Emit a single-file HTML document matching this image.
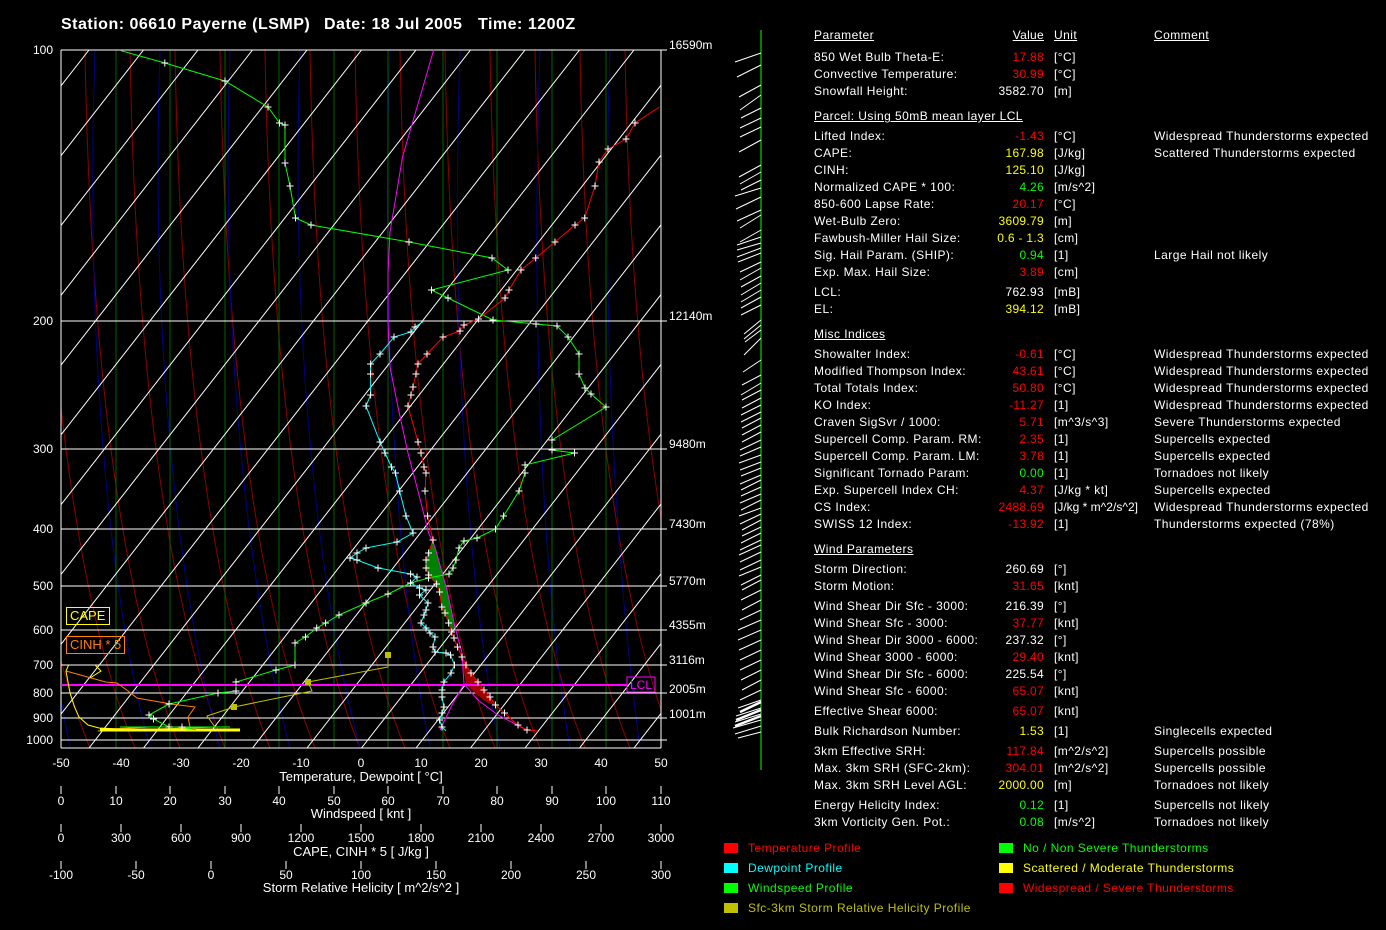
<!DOCTYPE html>
<html><head><meta charset="utf-8"><style>
html,body{margin:0;padding:0;background:#000;width:1386px;height:930px;overflow:hidden}
body{position:relative;font-family:"Liberation Sans",sans-serif;color:#fff;font-size:12px}
.t{position:absolute;white-space:nowrap;line-height:14px;letter-spacing:0.45px}
.u{text-decoration:underline}
.v{position:absolute;white-space:nowrap;line-height:14px;right:342px;text-align:right;letter-spacing:0.3px}
.r{color:#f00}.y{color:#ff0}.g{color:#0f0}
svg{position:absolute;left:0;top:0}
</style></head><body>
<svg width="1386" height="930" viewBox="0 0 1386 930" font-family="Liberation Sans, sans-serif" font-size="12">
<defs>
<clipPath id="pc"><rect x="61" y="50" width="600" height="698"/></clipPath>
<marker id="cw" markerWidth="7" markerHeight="7" refX="3.5" refY="3.5" markerUnits="userSpaceOnUse"><path d="M0 3.5H7M3.5 0V7" stroke="#fff" stroke-width="1"/></marker>
<pattern id="bp" width="1" height="1"/>
</defs>
<g clip-path="url(#pc)" fill="none">
<g stroke="#8b0000" stroke-width="1">
<path d="M90 748C30 600 0 350 -5 50"/><path d="M135 748C75 600 45 350 40 50"/><path d="M180 748C120 600 90 350 85 50"/><path d="M225 748C165 600 135 350 130 50"/><path d="M270 748C210 600 180 350 175 50"/><path d="M315 748C255 600 225 350 220 50"/><path d="M360 748C300 600 270 350 265 50"/><path d="M405 748C345 600 315 350 310 50"/><path d="M450 748C390 600 360 350 355 50"/><path d="M495 748C435 600 405 350 400 50"/><path d="M540 748C480 600 450 350 445 50"/><path d="M585 748C525 600 495 350 490 50"/><path d="M630 748C570 600 540 350 535 50"/><path d="M675 748C615 600 585 350 580 50"/><path d="M720 748C660 600 630 350 625 50"/><path d="M765 748C705 600 675 350 670 50"/>
</g>
<g stroke="#00008b" stroke-width="1">
<path d="M70 748C40 600 20 350 30 50"/><path d="M150 748C110 600 85 350 95 50"/><path d="M220 748C180 600 150 350 160 50"/><path d="M290 748C250 600 220 350 230 50"/><path d="M360 748C320 600 290 350 300 50"/><path d="M430 748C400 600 380 350 390 50"/><path d="M500 748C470 600 450 350 460 50"/><path d="M570 748C545 600 530 350 540 50"/><path d="M640 748C620 600 600 350 610 50"/>
</g>
<g stroke="#006400"><path d="M116 50V748M170 50V748M225 50V748M279 50V748M334 50V748M388 50V748M443 50V748M497 50V748M552 50V748M606 50V748"/></g>
<g stroke="#fff" stroke-width="1">
<path d="M89 50l-545 698M143.5 50l-545 698M198 50l-545 698M252.5 50l-545 698M307 50l-545 698M361.5 50l-545 698M416 50l-545 698M470.5 50l-545 698M525 50l-545 698M579.5 50l-545 698M634 50l-545 698M688.5 50l-545 698M743 50l-545 698M797.5 50l-545 698M852 50l-545 698M906.5 50l-545 698M961 50l-545 698M1015.5 50l-545 698M1070 50l-545 698M1124.5 50l-545 698M1179 50l-545 698M1233.5 50l-545 698"/>
</g>
</g>
<g stroke="#fff"><path d="M61 50H667M61 321H667M61 449H667M61 529H667M61 586H667M61 630H667M61 665H667M61 693H667M61 718H667M61 740H667M61 748H661M61 50V748M661 50V748"/></g>
<polygon fill="#008000" points="433,540 428,553 426,560 426,568 428.6,575 436.6,584 439.6,592 441.8,607 445,613 448.6,623 452,630 455,627 447,590 435,547"/>
<polygon fill="#a00000" points="459,650 466,665 471,673 478,682 484,690 490,697 495.5,705 488,703 476,694 466,684 462,660"/>
<path d="M61 685H627" stroke="#f0f" stroke-width="2"/>
<rect x="627" y="677" width="28" height="15" fill="none" stroke="#f0f"/>
<text x="630" y="689" fill="#f0f">LCL</text>
<polyline fill="none" stroke="#f0f" points="433.6,50 427,73 402.5,157 390,232 388,273 388,322 390,367 398,407 408,453 418,491 428.6,533 435,547 447,590 455,627 462,653 464,684 478,700 498,715 527,730"/>
<polyline fill="none" stroke="#f0f" points="464,684 452,705 440,730"/>
<polyline fill="none" stroke="#ff8000" points="66,671 105.6,682 117,683 128,691 137,698 171,704 195,707 188,717 190,727 150,727 110,729"/>
<polyline fill="none" stroke="#ff0" points="68.6,665 66,671 68,682 70,693 74.5,707 79,717 88,725 99,728 120,729"/>
<polyline fill="none" stroke="#ff0" points="95,665 101,671 90,678"/>
<polyline fill="none" stroke="#c0c000" points="388,655 388,667 308,682 312,691 234,707 207,716 215,727 97.7,731"/>
<path d="M100 730H240" stroke="#ff0" stroke-width="3"/>
<path d="M120 727H230" stroke="#0f0" stroke-width="1"/>
<rect x="385" y="652" width="6" height="6" fill="#c0c000"/><rect x="305" y="679" width="6" height="6" fill="#c0c000"/><rect x="231" y="704" width="6" height="6" fill="#c0c000"/>
<polyline fill="none" stroke="#0f0" marker-mid="url(#cw)" points="121,50.7 164.8,63 225,81 268,107 279.5,123 285,125 285,163 290,186 295.5,218 311,225 409,242 492,258 508,270 431.5,290 448,298 493,320 536,324 557,326 568,337 579,354 579,374 585,388 591,394 606,407 552,440 552,450 574.5,453 525,465 525,473 519,491 503.6,516 495.5,529 477,538 464,541 459,548 456,560 453,568 449,574 428.5,578 410.5,583 388,594 366,603 339,615 325.6,623 316.7,628 305.5,637 295,643 295,665 276,670 236,682 236,691 218,693 169,704 149,715 153.5,719 169,727 182,727 196,730"/>
<polyline fill="none" stroke="#f00" marker-mid="url(#cw)" points="659.5,107 635,123 626,139 608,149 599,162 595,186 584.7,218 575,225 555,242 535.7,258 521,270 509,290 505,298 478.5,319 464,325 460,331 443,337 427,354 418,364 416,374 413,387 411,395 408,406 418,442 421,453 424,467 426,473 425,491 427.6,516 433,540 428.6,553 426,560 426,568 428.6,575 436.6,584 439.6,592 441.8,607 445,613 448.6,623 451.6,632 454,638 457.5,647 462,657 466,665 471,673 478,682 484,690 490,697 495.5,705 504.5,713 518,725 527,730 538,731"/>
<polyline fill="none" stroke="#0ff" marker-mid="url(#cw)" points="423,321.7 415,327 411,332 394,337 380,354 370.6,364 370.6,374 370.6,395 366,406 380,442 385,453 391.5,467 395.5,473 399.6,491 406,516 413,533 397,542 366,548 357,553 350,558 357,560 378,568 410.6,574 417,577 410.6,583 419.5,588 426,590 419.5,595 428,603 426,610 424,615 421,623 426,628 430,633 435,637 433,647 435,652 446,653 450.5,655 454.5,665 451,673 444,682 442,690 442,697 444,707 442,713 439.6,720 442,727 446,731"/>
<rect x="66.5" y="607.5" width="43" height="17" fill="none" stroke="#ff0"/><text x="70" y="620" fill="#ff0" font-size="13">CAPE</text>
<rect x="66.5" y="636.5" width="58" height="17" fill="none" stroke="#ff8000"/><text x="70" y="649" fill="#ff8000" font-size="13">CINH * 5</text>
<g fill="#fff" text-anchor="end">
<text x="53" y="54">100</text><text x="53" y="325">200</text><text x="53" y="453">300</text><text x="53" y="533">400</text><text x="53" y="590">500</text><text x="53" y="634">600</text><text x="53" y="669">700</text><text x="53" y="697">800</text><text x="53" y="722">900</text><text x="53" y="744">1000</text>
</g>
<g fill="#fff">
<text x="669" y="49">16590m</text><text x="669" y="320">12140m</text><text x="669" y="448">9480m</text><text x="669" y="528">7430m</text><text x="669" y="585">5770m</text><text x="669" y="629">4355m</text><text x="669" y="664">3116m</text><text x="669" y="693">2005m</text><text x="669" y="718">1001m</text>
</g>
<g fill="#fff" text-anchor="middle">
<text x="61" y="767">-50</text><text x="121" y="767">-40</text><text x="181" y="767">-30</text><text x="241" y="767">-20</text><text x="301" y="767">-10</text><text x="361" y="767">0</text><text x="421" y="767">10</text><text x="481" y="767">20</text><text x="541" y="767">30</text><text x="601" y="767">40</text><text x="661" y="767">50</text>
<text x="361" y="781" font-size="13">Temperature, Dewpoint [ °C]</text>
<text x="61" y="805">0</text><text x="116" y="805">10</text><text x="170" y="805">20</text><text x="225" y="805">30</text><text x="279" y="805">40</text><text x="334" y="805">50</text><text x="388" y="805">60</text><text x="443" y="805">70</text><text x="497" y="805">80</text><text x="552" y="805">90</text><text x="606" y="805">100</text><text x="661" y="805">110</text>
<text x="361" y="818" font-size="13">Windspeed  [ knt ]</text>
<text x="61" y="842">0</text><text x="121" y="842">300</text><text x="181" y="842">600</text><text x="241" y="842">900</text><text x="301" y="842">1200</text><text x="361" y="842">1500</text><text x="421" y="842">1800</text><text x="481" y="842">2100</text><text x="541" y="842">2400</text><text x="601" y="842">2700</text><text x="661" y="842">3000</text>
<text x="361" y="856" font-size="13">CAPE, CINH * 5  [ J/kg ]</text>
<text x="61" y="879">-100</text><text x="136" y="879">-50</text><text x="211" y="879">0</text><text x="286" y="879">50</text><text x="361" y="879">100</text><text x="436" y="879">150</text><text x="511" y="879">200</text><text x="586" y="879">250</text><text x="661" y="879">300</text>
<text x="361" y="892" font-size="13">Storm Relative Helicity  [ m^2/s^2 ]</text>
</g>
<g stroke="#fff"><path d="M61 786v8M116 786v8M170 786v8M225 786v8M279 786v8M334 786v8M388 786v8M443 786v8M497 786v8M552 786v8M606 786v8M661 786v8M61 824v8M121 824v8M181 824v8M241 824v8M301 824v8M361 824v8M421 824v8M481 824v8M541 824v8M601 824v8M661 824v8M61 861v8M136 861v8M211 861v8M286 861v8M361 861v8M436 861v8M511 861v8M586 861v8M661 861v8"/></g>
<path d="M761 30V770" stroke="#0f0"/>
<g stroke="#fff" stroke-width="1">
<path d="M761 53L735 62M761 65L737 77M761 85L739 97M761 95L740 110M761 108L741 118M761 118L740 128M761 127L740 137M761 140L739 152M761 165L739 177M761 172L740 184M761 180L741 190M761 188L735 196M761 197L736 209M761 210L737 221M761 215L740 228M761 230L740 242M761 237L737 245M761 243L737 250M761 248L737 257M761 253L738 262M761 262L740 272M761 268L740 280M761 276L741 287M761 283L741 295M761 290L741 302M761 297L741 308M761 305L741 315M761 320L744 334M761 325L744 339M761 330L745 342M761 338L744 355M761 360L743 372M761 375L742 385M761 383L741 395M761 390L742 400M761 398L742 408M761 405L741 415M761 412L741 422M761 418L742 428M761 425L742 435M761 432L742 442M761 440L740 450M761 447L740 456M761 455L739 463M761 462L740 470M761 468L741 476M761 475L740 484M761 480L741 490M761 487L741 496M761 494L740 503M761 500L741 510M761 508L739 516M761 514L740 524M761 520L742 530M761 527L742 536M761 533L741 543M761 540L740 550M761 545L739 555M761 552L740 562M761 560L740 570M761 567L739 576M761 575L741 585M761 580L742 590M761 590L741 600M761 600L742 610M761 610L740 620M761 620L738 630M761 630L738 640M761 640L739 650M761 650L740 660M761 660L740 670M761 670L741 680M761 680L742 690M761 690L740 700M761 700L738 708M761 708L736 716M761 714L735 722M761 720L733 728M761 726L735 734M761 732L738 738"/>
<path d="M761 702L740 712M761 710L736 720M761 716L735 726" stroke-width="2.5"/>
</g>
<rect x="724" y="843" width="14" height="10" fill="#f00"/><rect x="724" y="863" width="14" height="10" fill="#0ff"/><rect x="724" y="883" width="14" height="10" fill="#0f0"/><rect x="724" y="903" width="14" height="10" fill="#c0c000"/>
<rect x="999" y="843" width="14" height="10" fill="#0f0"/><rect x="999" y="863" width="14" height="10" fill="#ff0"/><rect x="999" y="883" width="14" height="10" fill="#f00"/>
<g letter-spacing="0.45">
<text x="748" y="852" fill="#f00">Temperature Profile</text><text x="748" y="872" fill="#0ff">Dewpoint Profile</text><text x="748" y="892" fill="#0f0">Windspeed Profile</text><text x="748" y="912" fill="#c0c000">Sfc-3km Storm Relative Helicity Profile</text>
<text x="1023" y="852" fill="#0f0">No / Non Severe Thunderstorms</text><text x="1023" y="872" fill="#ff0">Scattered / Moderate Thunderstorms</text><text x="1023" y="892" fill="#f00">Widespread / Severe Thunderstorms</text>
</g>
<g font-size="16" font-weight="bold" fill="#fff" letter-spacing="0.5">
<text x="61" y="29">Station: 06610 Payerne (LSMP)</text>
<text x="324" y="29">Date: 18 Jul 2005</text>
<text x="478" y="29">Time: 1200Z</text>
</g>
</svg>

<div class="t u" style="left:814px;top:28px">Parameter</div><div class="v u" style="top:28px">Value</div><div class="t u" style="left:1054px;top:28px">Unit</div><div class="t u" style="left:1154px;top:28px">Comment</div>

<div class="t" style="left:814px;top:50px">850 Wet Bulb Theta-E:</div><div class="v r" style="top:50px">17.88</div><div class="t" style="left:1054px;top:50px">[°C]</div>
<div class="t" style="left:814px;top:67px">Convective Temperature:</div><div class="v r" style="top:67px">30.99</div><div class="t" style="left:1054px;top:67px">[°C]</div>
<div class="t" style="left:814px;top:84px">Snowfall Height:</div><div class="v" style="top:84px">3582.70</div><div class="t" style="left:1054px;top:84px">[m]</div>

<div class="t u" style="left:814px;top:109px">Parcel: Using 50mB mean layer LCL</div>
<div class="t" style="left:814px;top:129px">Lifted Index:</div><div class="v r" style="top:129px">-1.43</div><div class="t" style="left:1054px;top:129px">[°C]</div><div class="t" style="left:1154px;top:129px">Widespread Thunderstorms expected</div>
<div class="t" style="left:814px;top:146px">CAPE:</div><div class="v y" style="top:146px">167.98</div><div class="t" style="left:1054px;top:146px">[J/kg]</div><div class="t" style="left:1154px;top:146px">Scattered Thunderstorms expected</div>
<div class="t" style="left:814px;top:163px">CINH:</div><div class="v y" style="top:163px">125.10</div><div class="t" style="left:1054px;top:163px">[J/kg]</div>
<div class="t" style="left:814px;top:180px">Normalized CAPE * 100:</div><div class="v g" style="top:180px">4.26</div><div class="t" style="left:1054px;top:180px">[m/s^2]</div>
<div class="t" style="left:814px;top:197px">850-600 Lapse Rate:</div><div class="v r" style="top:197px">20.17</div><div class="t" style="left:1054px;top:197px">[°C]</div>
<div class="t" style="left:814px;top:214px">Wet-Bulb Zero:</div><div class="v y" style="top:214px">3609.79</div><div class="t" style="left:1054px;top:214px">[m]</div>
<div class="t" style="left:814px;top:231px">Fawbush-Miller Hail Size:</div><div class="v y" style="top:231px">0.6 - 1.3</div><div class="t" style="left:1054px;top:231px">[cm]</div>
<div class="t" style="left:814px;top:248px">Sig. Hail Param. (SHIP):</div><div class="v g" style="top:248px">0.94</div><div class="t" style="left:1054px;top:248px">[1]</div><div class="t" style="left:1154px;top:248px">Large Hail not likely</div>
<div class="t" style="left:814px;top:265px">Exp. Max. Hail Size:</div><div class="v r" style="top:265px">3.89</div><div class="t" style="left:1054px;top:265px">[cm]</div>
<div class="t" style="left:814px;top:285px">LCL:</div><div class="v" style="top:285px">762.93</div><div class="t" style="left:1054px;top:285px">[mB]</div>
<div class="t" style="left:814px;top:302px">EL:</div><div class="v y" style="top:302px">394.12</div><div class="t" style="left:1054px;top:302px">[mB]</div>

<div class="t u" style="left:814px;top:327px">Misc Indices</div>
<div class="t" style="left:814px;top:347px">Showalter Index:</div><div class="v r" style="top:347px">-0.61</div><div class="t" style="left:1054px;top:347px">[°C]</div><div class="t" style="left:1154px;top:347px">Widespread Thunderstorms expected</div>
<div class="t" style="left:814px;top:364px">Modified Thompson Index:</div><div class="v r" style="top:364px">43.61</div><div class="t" style="left:1054px;top:364px">[°C]</div><div class="t" style="left:1154px;top:364px">Widespread Thunderstorms expected</div>
<div class="t" style="left:814px;top:381px">Total Totals Index:</div><div class="v r" style="top:381px">50.80</div><div class="t" style="left:1054px;top:381px">[°C]</div><div class="t" style="left:1154px;top:381px">Widespread Thunderstorms expected</div>
<div class="t" style="left:814px;top:398px">KO Index:</div><div class="v r" style="top:398px">-11.27</div><div class="t" style="left:1054px;top:398px">[1]</div><div class="t" style="left:1154px;top:398px">Widespread Thunderstorms expected</div>
<div class="t" style="left:814px;top:415px">Craven SigSvr / 1000:</div><div class="v r" style="top:415px">5.71</div><div class="t" style="left:1054px;top:415px">[m^3/s^3]</div><div class="t" style="left:1154px;top:415px">Severe Thunderstorms expected</div>
<div class="t" style="left:814px;top:432px">Supercell Comp. Param. RM:</div><div class="v r" style="top:432px">2.35</div><div class="t" style="left:1054px;top:432px">[1]</div><div class="t" style="left:1154px;top:432px">Supercells expected</div>
<div class="t" style="left:814px;top:449px">Supercell Comp. Param. LM:</div><div class="v r" style="top:449px">3.78</div><div class="t" style="left:1054px;top:449px">[1]</div><div class="t" style="left:1154px;top:449px">Supercells expected</div>
<div class="t" style="left:814px;top:466px">Significant Tornado Param:</div><div class="v g" style="top:466px">0.00</div><div class="t" style="left:1054px;top:466px">[1]</div><div class="t" style="left:1154px;top:466px">Tornadoes not likely</div>
<div class="t" style="left:814px;top:483px">Exp. Supercell Index CH:</div><div class="v r" style="top:483px">4.37</div><div class="t" style="left:1054px;top:483px">[J/kg * kt]</div><div class="t" style="left:1154px;top:483px">Supercells expected</div>
<div class="t" style="left:814px;top:500px">CS Index:</div><div class="v r" style="top:500px">2488.69</div><div class="t" style="left:1054px;top:500px;letter-spacing:0px">[J/kg * m^2/s^2]</div><div class="t" style="left:1154px;top:500px">Widespread Thunderstorms expected</div>
<div class="t" style="left:814px;top:517px">SWISS 12 Index:</div><div class="v r" style="top:517px">-13.92</div><div class="t" style="left:1054px;top:517px">[1]</div><div class="t" style="left:1154px;top:517px">Thunderstorms expected (78%)</div>

<div class="t u" style="left:814px;top:542px">Wind Parameters</div>
<div class="t" style="left:814px;top:562px">Storm Direction:</div><div class="v" style="top:562px">260.69</div><div class="t" style="left:1054px;top:562px">[°]</div>
<div class="t" style="left:814px;top:579px">Storm Motion:</div><div class="v r" style="top:579px">31.65</div><div class="t" style="left:1054px;top:579px">[knt]</div>
<div class="t" style="left:814px;top:599px">Wind Shear Dir Sfc - 3000:</div><div class="v" style="top:599px">216.39</div><div class="t" style="left:1054px;top:599px">[°]</div>
<div class="t" style="left:814px;top:616px">Wind Shear Sfc - 3000:</div><div class="v r" style="top:616px">37.77</div><div class="t" style="left:1054px;top:616px">[knt]</div>
<div class="t" style="left:814px;top:633px">Wind Shear Dir 3000 - 6000:</div><div class="v" style="top:633px">237.32</div><div class="t" style="left:1054px;top:633px">[°]</div>
<div class="t" style="left:814px;top:650px">Wind Shear 3000 - 6000:</div><div class="v r" style="top:650px">29.40</div><div class="t" style="left:1054px;top:650px">[knt]</div>
<div class="t" style="left:814px;top:667px">Wind Shear Dir Sfc - 6000:</div><div class="v" style="top:667px">225.54</div><div class="t" style="left:1054px;top:667px">[°]</div>
<div class="t" style="left:814px;top:684px">Wind Shear Sfc - 6000:</div><div class="v r" style="top:684px">65.07</div><div class="t" style="left:1054px;top:684px">[knt]</div>
<div class="t" style="left:814px;top:704px">Effective Shear 6000:</div><div class="v r" style="top:704px">65.07</div><div class="t" style="left:1054px;top:704px">[knt]</div>
<div class="t" style="left:814px;top:724px">Bulk Richardson Number:</div><div class="v y" style="top:724px">1.53</div><div class="t" style="left:1054px;top:724px">[1]</div><div class="t" style="left:1154px;top:724px">Singlecells expected</div>
<div class="t" style="left:814px;top:744px">3km Effective SRH:</div><div class="v r" style="top:744px">117.84</div><div class="t" style="left:1054px;top:744px">[m^2/s^2]</div><div class="t" style="left:1154px;top:744px">Supercells possible</div>
<div class="t" style="left:814px;top:761px">Max. 3km SRH (SFC-2km):</div><div class="v r" style="top:761px">304.01</div><div class="t" style="left:1054px;top:761px">[m^2/s^2]</div><div class="t" style="left:1154px;top:761px">Supercells possible</div>
<div class="t" style="left:814px;top:778px">Max. 3km SRH Level AGL:</div><div class="v y" style="top:778px">2000.00</div><div class="t" style="left:1054px;top:778px">[m]</div><div class="t" style="left:1154px;top:778px">Tornadoes not likely</div>
<div class="t" style="left:814px;top:798px">Energy Helicity Index:</div><div class="v g" style="top:798px">0.12</div><div class="t" style="left:1054px;top:798px">[1]</div><div class="t" style="left:1154px;top:798px">Supercells not likely</div>
<div class="t" style="left:814px;top:815px">3km Vorticity Gen. Pot.:</div><div class="v g" style="top:815px">0.08</div><div class="t" style="left:1054px;top:815px">[m/s^2]</div><div class="t" style="left:1154px;top:815px">Tornadoes not likely</div>
</body></html>
